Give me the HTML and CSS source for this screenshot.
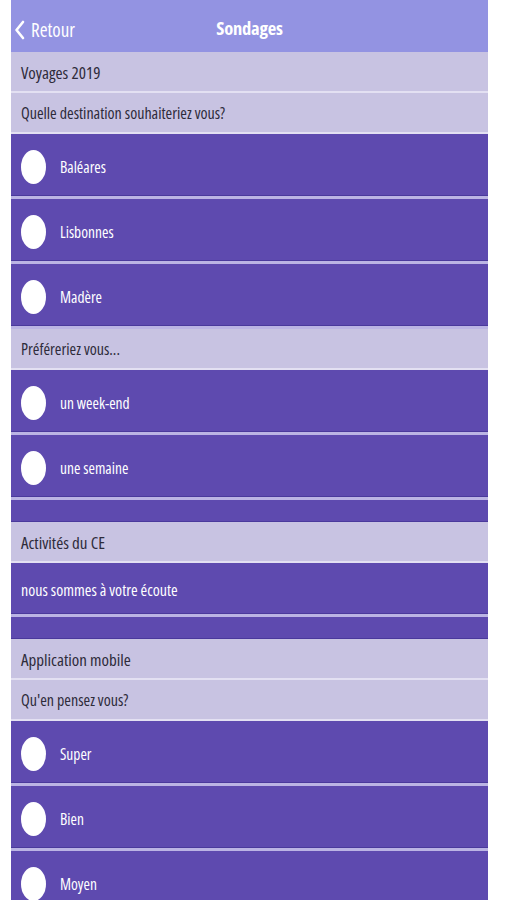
FILE: index.html
```html
<!DOCTYPE html>
<html lang="fr">
<head>
<meta charset="utf-8">
<title>Sondages</title>
<link rel="stylesheet" href="styles.css">
</head>
<body>
<div class="app">
  <header class="topbar">
    <a class="back">
      <svg class="chev" width="11" height="20" viewBox="0 0 11 20"><path d="M9 2 L2.5 10 L9 18" fill="none" stroke="#ffffff" stroke-width="2.6" stroke-linecap="round" stroke-linejoin="round"/></svg>
      <span>Retour</span>
    </a>
    <h1 class="title">Sondages</h1>
  </header>

  <div class="row light">Voyages 2019</div>
  <div class="row light q">Quelle destination souhaiteriez vous?</div>
  <div class="row opt"><span class="dot"></span><span>Baléares</span></div>
  <div class="row opt"><span class="dot"></span><span>Lisbonnes</span></div>
  <div class="row opt"><span class="dot"></span><span>Madère</span></div>
  <div class="row light q">Préféreriez vous...</div>
  <div class="row opt"><span class="dot"></span><span>un week-end</span></div>
  <div class="row opt"><span class="dot"></span><span>une semaine</span></div>
  <div class="row spacer"></div>

  <div class="row light">Activités du CE</div>
  <div class="row comment">nous sommes à votre écoute</div>
  <div class="row spacer"></div>

  <div class="row light">Application mobile</div>
  <div class="row light q">Qu'en pensez vous?</div>
  <div class="row opt"><span class="dot"></span><span>Super</span></div>
  <div class="row opt"><span class="dot"></span><span>Bien</span></div>
  <div class="row opt"><span class="dot"></span><span>Moyen</span></div>
</div>
</body>
</html>
```

FILE: styles.css
```css
* { box-sizing: border-box; }
html, body { margin: 0; padding: 0; background: #ffffff; }
body {
  font-family: "Liberation Sans Narrow", "Open Sans", "Liberation Sans", sans-serif;
  font-stretch: condensed;
  height: 900px;
  overflow: hidden;
}
.app {
  width: 477px;
  margin-left: 11px;
  background: #bbb4e4;
}
.topbar {
  position: relative;
  height: 52px;
  background: #9393e2;
  display: flex;
  align-items: center;
  justify-content: center;
  padding-top: 2px;
}
.back {
  position: absolute;
  left: 3px;
  top: 17px;
  display: flex;
  align-items: center;
  gap: 6px;
  color: #ffffff;
  font-size: 19px;
}
.chev { display: block; }
.title {
  margin: 0;
  color: #ffffff;
  font-size: 18.5px;
  font-weight: bold;
  letter-spacing: -0.2px;
  padding-left: 0;
}
.row {
  display: flex;
  align-items: center;
}
.light {
  height: 41px;
  padding: 1px 10px 0;
  background: #c8c3e2;
  border-bottom: 2px solid #e3e0f2;
  color: #2e2b3a;
  font-size: 17px;
}
.light.q { font-size: 16px; }
.opt {
  height: 62px;
  margin-bottom: 3px;
  padding: 5px 0 0 10px;
  gap: 14px;
  background: #5e4aaf;
  border-bottom: 1px solid #4a399c;
  color: #ffffff;
  font-size: 15.5px;
}
.dot {
  width: 25px;
  height: 34px;
  border-radius: 50%;
  background: #ffffff;
  flex: none;
}
.spacer {
  height: 22px;
  background: #5e4aaf;
  border-bottom: 1px solid #4a399c;
}
.comment {
  height: 51px;
  margin-bottom: 3px;
  padding: 4px 0 0 10px;
  background: #5e4aaf;
  border-bottom: 1px solid #4a399c;
  color: #ffffff;
  font-size: 16px;
}
```
